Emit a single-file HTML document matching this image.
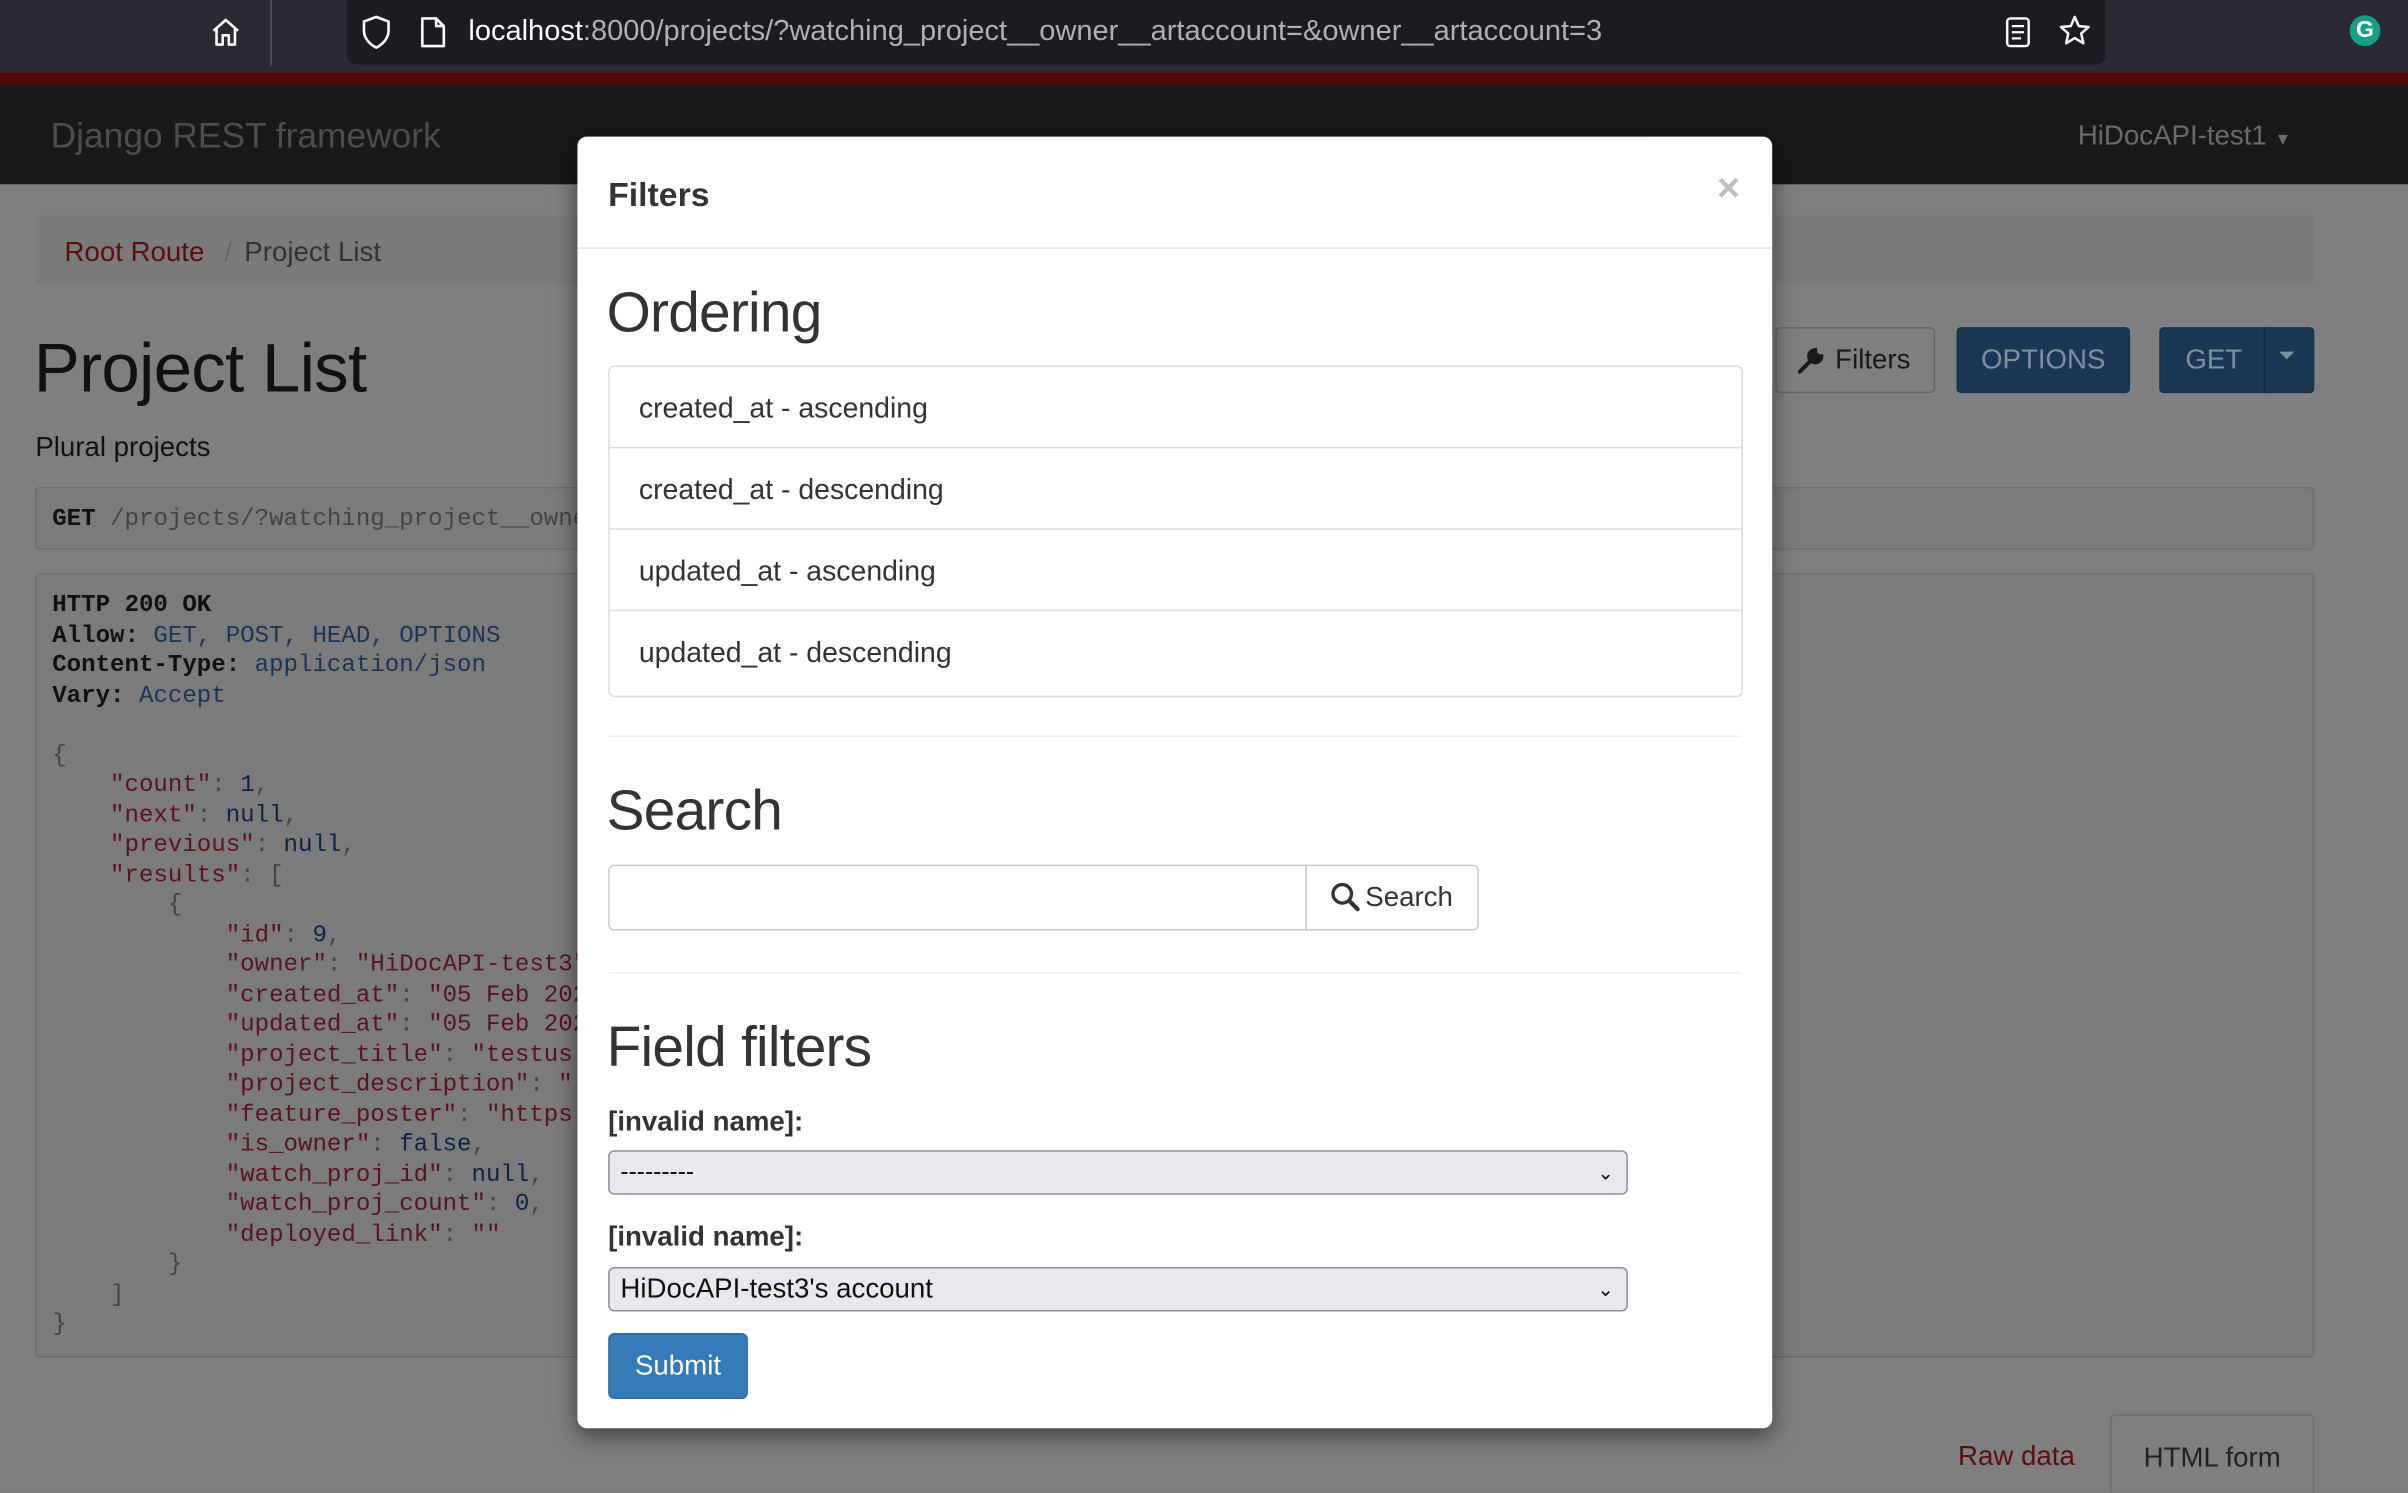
<!DOCTYPE html>
<html><head><meta charset="utf-8">
<style>
html,body{margin:0;padding:0;width:2408px;height:1492px;overflow:hidden;background:#7f7f7f;}
#w{position:absolute;left:0;top:0;width:1568px;height:972px;transform:scale(1.53572);transform-origin:0 0;font-family:"Liberation Sans",Arial,sans-serif;background:#7f7f7f;overflow:hidden;}
.a{position:absolute;}
pre{margin:0;font-family:"Liberation Mono",monospace;font-size:15.7px;line-height:19.5px;color:#111;}
.k{color:#5a1420}.s{color:#5a1420}.n{color:#0f2346}.b{color:#1e3454}.p{color:#444}
.li{position:absolute;left:0;width:737px;height:53px;border-bottom:1px solid #ddd;font-size:18.5px;color:#333;line-height:53px;padding-left:19px;box-sizing:border-box;}
h2{margin:0;font-weight:400;letter-spacing:-0.5px;}
</style></head><body><div id="w">
<div class="a" style="left:0;top:0;width:1568px;height:47px;background:#2b2a33"></div>
<div class="a" style="left:176px;top:0;width:1px;height:43px;background:#55545c"></div>
<svg class="a" style="left:136px;top:10px" width="22" height="22" viewBox="0 0 22 22"><path d="M3 10 L11 3 L19 10 M5 8.5 V19 H9 V13 H13 V19 H17 V8.5" fill="none" stroke="#fbfbfe" stroke-width="1.7" stroke-linejoin="round"/></svg>
<div class="a" style="left:226px;top:0;width:1145px;height:42px;background:#1c1b22;border-radius:0 0 6px 6px"></div>
<svg class="a" style="left:234px;top:9px" width="22" height="24" viewBox="0 0 22 24"><path d="M11 2 L19 5 V11 C19 16 15 20 11 22 C7 20 3 16 3 11 V5 Z" fill="none" stroke="#fbfbfe" stroke-width="1.7"/></svg>
<svg class="a" style="left:272px;top:10px" width="20" height="22" viewBox="0 0 20 22"><path d="M3 2 H12 L17 7 V20 H3 Z M12 2 V7 H17" fill="none" stroke="#fbfbfe" stroke-width="1.7" stroke-linejoin="round"/></svg>
<div class="a" style="left:305px;top:10px;font-size:18.9px;color:#fbfbfe;white-space:nowrap">localhost<span style="color:#b0afb5">:8000/projects/?watching_project__owner__artaccount=&amp;owner__artaccount=3</span></div>
<svg class="a" style="left:1304px;top:10px" width="20" height="22" viewBox="0 0 20 22"><rect x="3" y="2" width="14" height="18" rx="2" fill="none" stroke="#fbfbfe" stroke-width="1.6"/><path d="M6 7H14M6 11H14M6 15H12" stroke="#fbfbfe" stroke-width="1.5"/></svg>
<svg class="a" style="left:1340px;top:9px" width="22" height="22" viewBox="0 0 22 22"><path d="M11 2 L13.6 8 L20 8.6 L15.2 12.8 L16.6 19.2 L11 15.8 L5.4 19.2 L6.8 12.8 L2 8.6 L8.4 8 Z" fill="none" stroke="#fbfbfe" stroke-width="1.6" stroke-linejoin="round"/></svg>
<div class="a" style="left:1530px;top:10px;width:20px;height:20px;border-radius:50%;background:#15a085;color:#fff;font-size:15px;font-weight:700;text-align:center;line-height:20px">G</div>
<div class="a" style="left:0;top:47px;width:1568px;height:8px;background:#4e0a08"></div>
<div class="a" style="left:0;top:55px;width:1568px;height:65px;background:#181818"></div>
<div class="a" style="left:33px;top:75px;font-size:23px;color:#4d4d4d">Django REST framework</div>
<div class="a" style="left:1353px;top:78px;font-size:18px;color:#6b6b6b">HiDocAPI-test1 <span style="font-size:11px">&#9660;</span></div>
<div class="a" style="left:23px;top:140px;width:1484px;height:45px;background:#7a7a7a;border-radius:3px"></div>
<div class="a" style="left:42px;top:154px;font-size:18px;color:#5c0f0f">Root Route <span style="color:#666;padding:0 8px">/</span><span style="color:#333">Project List</span></div>
<div class="a" style="left:22px;top:214px;font-size:45px;letter-spacing:-0.5px;color:#111">Project List</div>
<div class="a" style="left:23px;top:281px;font-size:18px;color:#111">Plural projects</div>
<div class="a" style="left:1156px;top:213px;width:104px;height:43px;border:1px solid #666;border-radius:3px;box-sizing:border-box;font-size:18px;color:#191919;line-height:41px;padding-left:38px">Filters</div>
<svg class="a" style="left:1170px;top:224px" width="20" height="20" viewBox="0 0 20 20"><path d="M2 18 L11 9 M12 4 a4 4 0 1 0 4 4 l-2 0 -2 -2 z" fill="#191919" stroke="#191919" stroke-width="2.6" stroke-linecap="round"/></svg>
<div class="a" style="left:1274px;top:213px;width:113px;height:43px;background:#1a3856;border:1px solid #17304a;border-radius:3px;box-sizing:border-box;font-size:18px;color:#7f8fa0;line-height:41px;text-align:center">OPTIONS</div>
<div class="a" style="left:1406px;top:213px;width:101px;height:43px;background:#1a3856;border:1px solid #17304a;border-radius:3px;box-sizing:border-box;font-size:18px;color:#7f8fa0;line-height:41px;padding-left:16px">GET</div>
<div class="a" style="left:1474px;top:213px;width:1px;height:43px;background:#13283d"></div>
<div class="a" style="left:1484px;top:229px;width:0;height:0;border-left:5px solid transparent;border-right:5px solid transparent;border-top:5px solid #7f8fa0"></div>
<div class="a" style="left:23px;top:317px;width:1484px;height:41px;background:#7b7b7b;border:1px solid #6e6e6e;border-radius:3px;box-sizing:border-box"></div>
<pre class="a" style="left:34px;top:329px"><b>GET</b> <span class="p">/projects/?watching_project__owner</span></pre>
<div class="a" style="left:23px;top:373px;width:1484px;height:511px;background:#7b7b7b;border:1px solid #6e6e6e;border-radius:3px;box-sizing:border-box"></div>
<pre class="a" style="left:34px;top:385px"><b>HTTP 200 OK</b>
<b>Allow:</b> <span class="b">GET, POST, HEAD, OPTIONS</span>
<b>Content-Type:</b> <span class="b">application/json</span>
<b>Vary:</b> <span class="b">Accept</span>

<span class="p">{</span>
    <span class="k">"count"</span><span class="p">:</span> <span class="n">1</span><span class="p">,</span>
    <span class="k">"next"</span><span class="p">:</span> <span class="n">null</span><span class="p">,</span>
    <span class="k">"previous"</span><span class="p">:</span> <span class="n">null</span><span class="p">,</span>
    <span class="k">"results"</span><span class="p">: [</span>
        <span class="p">{</span>
            <span class="k">"id"</span><span class="p">:</span> <span class="n">9</span><span class="p">,</span>
            <span class="k">"owner"</span><span class="p">:</span> <span class="s">"HiDocAPI-test3"</span>
            <span class="k">"created_at"</span><span class="p">:</span> <span class="s">"05 Feb 202</span>
            <span class="k">"updated_at"</span><span class="p">:</span> <span class="s">"05 Feb 202</span>
            <span class="k">"project_title"</span><span class="p">:</span> <span class="s">"testus</span>
            <span class="k">"project_description"</span><span class="p">:</span> <span class="s">"</span>
            <span class="k">"feature_poster"</span><span class="p">:</span> <span class="s">"https</span>
            <span class="k">"is_owner"</span><span class="p">:</span> <span class="n">false</span><span class="p">,</span>
            <span class="k">"watch_proj_id"</span><span class="p">:</span> <span class="n">null</span><span class="p">,</span>
            <span class="k">"watch_proj_count"</span><span class="p">:</span> <span class="n">0</span><span class="p">,</span>
            <span class="k">"deployed_link"</span><span class="p">:</span> <span class="s">""</span>
        <span class="p">}</span>
    <span class="p">]</span>
<span class="p">}</span></pre>
<div class="a" style="left:1275px;top:938px;font-size:18px;color:#5c0f0f">Raw data</div>
<div class="a" style="left:1374px;top:921px;width:133px;height:60px;background:#7f7f7f;border:1px solid #6e6e6e;border-radius:3px 3px 0 0;box-sizing:border-box;font-size:18px;color:#222;text-align:center;padding-top:17px">HTML form</div>
<div class="a" style="left:376px;top:89px;width:778px;height:841px;background:#fff;border-radius:6px;box-shadow:0 5px 15px rgba(0,0,0,.5)">
 <div class="a" style="left:20px;top:25px;font-size:22px;font-weight:700;color:#333">Filters</div>
 <div class="a" style="left:742px;top:18px;font-size:26px;font-weight:700;color:#c0c0c0">×</div>
 <div class="a" style="left:0;top:72px;width:778px;height:1px;background:#e5e5e5"></div>
 <h2 class="a" style="left:19px;top:94px;font-size:37px;color:#333">Ordering</h2>
 <div class="a" style="left:20px;top:149px;width:737px;height:214px;border:1px solid #ddd;border-radius:4px;overflow:hidden">
  <div class="li" style="top:0">created_at - ascending</div>
  <div class="li" style="top:53px">created_at - descending</div>
  <div class="li" style="top:106px">updated_at - ascending</div>
  <div class="li" style="top:159px;border-bottom:none">updated_at - descending</div>
 </div>
 <div class="a" style="left:20px;top:390px;width:738px;height:1px;background:#eee"></div>
 <h2 class="a" style="left:19px;top:418px;font-size:37px;color:#333">Search</h2>
 <div class="a" style="left:20px;top:474px;width:455px;height:43px;border:1px solid #ccc;border-radius:4px 0 0 4px;box-sizing:border-box"></div>
 <div class="a" style="left:474px;top:474px;width:113px;height:43px;border:1px solid #ccc;border-radius:0 4px 4px 0;box-sizing:border-box;font-size:18px;color:#333;line-height:41px;padding-left:38px">Search</div>
 <svg class="a" style="left:490px;top:485px" width="20" height="20" viewBox="0 0 20 20"><circle cx="8" cy="8" r="6" fill="none" stroke="#333" stroke-width="2.2"/><path d="M12.5 12.5 L18 18" stroke="#333" stroke-width="2.8" stroke-linecap="round"/></svg>
 <div class="a" style="left:20px;top:544px;width:738px;height:1px;background:#eee"></div>
 <h2 class="a" style="left:19px;top:572px;font-size:37px;color:#333">Field filters</h2>
 <div class="a" style="left:20px;top:631px;font-size:18px;font-weight:700;color:#333">[invalid name]:</div>
 <div class="a" style="left:20px;top:660px;width:664px;height:29px;background:#e9e9ed;border:1px solid #8f8f9d;border-radius:4px;box-sizing:border-box;font-size:16px;color:#111;line-height:27px;padding-left:7px">---------<span style="position:absolute;right:8px;top:0;font-size:13px">&#8964;</span></div>
 <div class="a" style="left:20px;top:706px;font-size:18px;font-weight:700;color:#333">[invalid name]:</div>
 <div class="a" style="left:20px;top:736px;width:664px;height:29px;background:#e9e9ed;border:1px solid #8f8f9d;border-radius:4px;box-sizing:border-box;font-size:18px;color:#111;line-height:27px;padding-left:7px">HiDocAPI-test3's account<span style="position:absolute;right:8px;top:0;font-size:13px">&#8964;</span></div>
 <div class="a" style="left:20px;top:779px;width:91px;height:43px;background:#337ab7;border:1px solid #2e6da4;border-radius:4px;box-sizing:border-box;font-size:18px;color:#fff;line-height:41px;text-align:center">Submit</div>
</div>
</div></body></html>
